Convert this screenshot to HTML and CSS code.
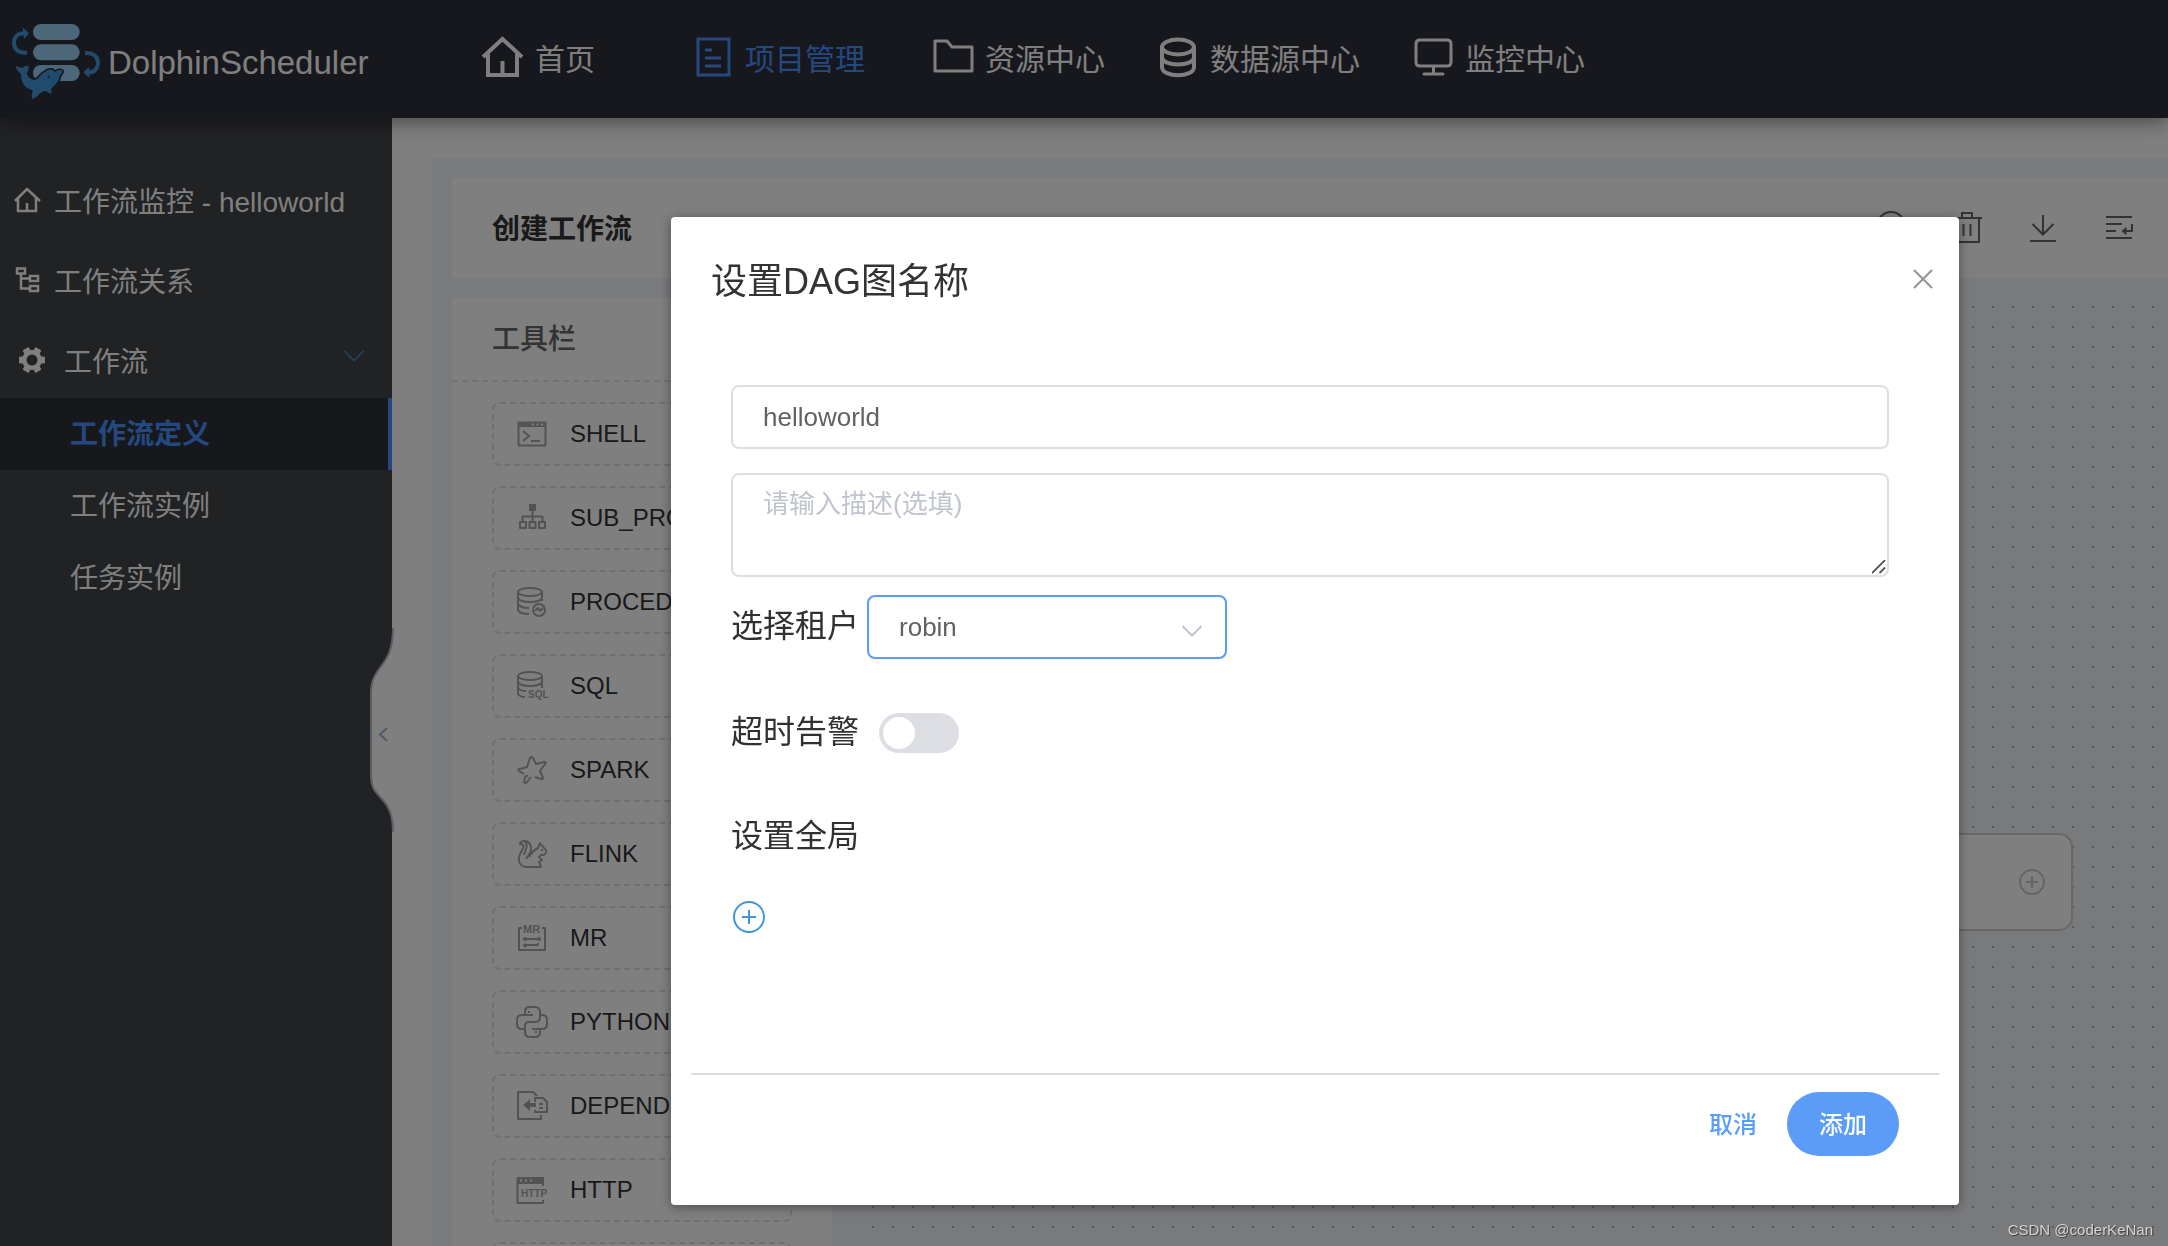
FILE: index.html
```html
<!DOCTYPE html>
<html lang="zh-CN">
<head>
<meta charset="utf-8">
<meta name="viewport" content="width=device-width, initial-scale=1">
<title>DolphinScheduler</title>
<link rel="stylesheet" href="styles.css">
</head>
<body>
<div class="app">
  <header class="topbar">
    <a class="logo" href="#">
      <svg class="logo-mark" viewBox="0 0 300 300" aria-hidden="true">
        <g fill="#98cff3">
          <rect x="99" y="42" width="140" height="48" rx="24"/>
          <rect x="99" y="103" width="140" height="48" rx="24"/>
          <rect x="99" y="165" width="140" height="48" rx="24"/>
        </g>
        <g fill="none" stroke="#4297d8" stroke-width="12">
          <path d="M81 128C54 131 42 116 42 99C42 80 54 70 72 70"/>
          <path d="M255 130C281 126 294 142 294 158C294 176 282 187 267 187"/>
        </g>
        <path fill="#4297d8" d="M68 52L87 70L72 87ZM268 170L250 187L268 204Z"/>
        <path fill="#4297d8" stroke="#2f313b" stroke-width="10" paint-order="stroke" d="M48 167C54 171 62 171 68 174C74 168 80 166 86 168C86 177 84 184 80 190C84 204 96 212 108 209C118 203 122 192 135 186C140 180 148 178 158 180L164 187C172 180 184 178 187 183C188 188 183 191 180 196C178 212 166 226 154 235L153 252L138 243C128 244 122 247 118 252C112 259 106 264 97 267C94 262 96 250 98 241C80 236 66 224 64 205C63 198 64 193 62 190C52 184 48 176 48 167Z"/>
        <circle cx="146" cy="200" r="3" fill="#2f313b"/>
      </svg>
      <span>DolphinScheduler</span>
    </a>
    <nav class="main-nav">
      <a href="#"><svg viewBox="0 0 44 44"><path fill="none" stroke="currentColor" stroke-width="4" d="M2 22L21.500 4L41 22M7 19V40H36V19M21.500 26V39"/></svg>首页</a>
      <a href="#" class="current"><svg viewBox="0 0 44 44"><path fill="none" stroke="currentColor" stroke-width="3" d="M7 4H38V40H7ZM14 15H21M14 23H30M14 31H30"/></svg>项目管理</a>
      <a href="#"><svg viewBox="0 0 44 44"><path fill="none" stroke="currentColor" stroke-width="3" stroke-linejoin="round" d="M4 6H16L21 12H41V36H4Z"/></svg>资源中心</a>
      <a href="#"><svg viewBox="0 0 44 44"><g fill="none" stroke="currentColor" stroke-width="4"><ellipse cx="22" cy="12" rx="16" ry="7.500"/><path d="M6 12V32C6 43 38 43 38 32V12M6 22C6 32 38 32 38 22"/></g></svg>数据源中心</a>
      <a href="#"><svg viewBox="0 0 44 44"><path fill="none" stroke="currentColor" stroke-width="3" stroke-linecap="round" d="M9 5H36Q40 5 40 9V27Q40 31 36 31H9Q5 31 5 27V9Q5 5 9 5ZM22.500 31V38M13 39H32"/></svg>监控中心</a>
    </nav>
  </header>

  <div class="shell">
    <aside class="sidebar">
      <a class="side-link" href="#"><svg viewBox="0 0 30 30"><path fill="none" stroke="currentColor" stroke-width="2.500" d="M1 16L13 4L26 16M4 13V26H22V13M13 18V26"/></svg>工作流监控 - helloworld</a>
      <a class="side-link" href="#"><svg viewBox="0 0 30 30"><path fill="none" stroke="currentColor" stroke-width="2.500" d="M3 3.500H11V8.500H3ZM16 11H24V16H16ZM16 21H24V26H16ZM7 9V23.500H16M7 13.500H16"/></svg>工作流关系</a>
      <a class="side-link group" href="#"><svg viewBox="0 0 30 30"><g fill="currentColor"><rect x="11.500" y="2" width="7" height="26" rx="1" transform="rotate(30 15 15)"/><rect x="11.500" y="2" width="7" height="26" rx="1" transform="rotate(90 15 15)"/><rect x="11.500" y="2" width="7" height="26" rx="1" transform="rotate(150 15 15)"/><circle cx="15" cy="15" r="10"/></g><circle cx="15" cy="15" r="5.500" fill="#424449"/></svg>工作流<svg class="fold" viewBox="0 0 20 12"><path fill="none" stroke="#4690d0" stroke-width="1.500" d="M0.500 1L10 10.500L19.500 1"/></svg></a>
      <div class="side-sub">
        <a class="current" href="#">工作流定义</a>
        <a href="#">工作流实例</a>
        <a href="#">任务实例</a>
      </div>
    </aside>

    <main class="main">
      <button class="collapse" type="button" aria-label="收起菜单"><svg viewBox="0 0 24 206" preserveAspectRatio="none"><path fill="#fff" d="M24 0H23C23 42 1 36 1 66V150C1 174 23 168 23 206H24Z"/><path fill="none" stroke="#b9bccd" stroke-width="2" d="M23 0C23 42 1 36 1 66V150C1 174 23 168 23 206"/><path fill="none" stroke="#9fb0d6" stroke-width="2" d="M17 101L10 107.500L17 114"/></svg></button>
      <section class="workspace">
        <div class="work-head">
          <h1>创建工作流</h1>
          <div class="work-tools">
            <button type="button" aria-label="查看"><svg viewBox="0 0 32 32"><circle cx="16" cy="15" r="14"/></svg></button>
            <button type="button" aria-label="删除"><svg viewBox="0 0 32 32"><path d="M1 7H31M11 7V2H21V7M4 7V31H28V7M12.500 13V25M19.500 13V25"/></svg></button>
            <button type="button" aria-label="下载"><svg viewBox="0 0 32 32"><path d="M16 4V22M5.500 13L16 23.500L26.500 13M3 30H29"/></svg></button>
            <button type="button" aria-label="格式化"><svg viewBox="0 0 32 32"><path d="M3 6H29M3 13H19M3 20H13M3 27H29M29 13V20H20M23.500 17L20 20L23.500 23"/></svg></button>
          </div>
        </div>
        <div class="work-body">
          <div class="toolbox">
            <h2>工具栏</h2>
            <ul>
              <li><svg viewBox="0 0 32 32"><path d="M2.500 4.500H29.500V27.500H2.500ZM7 13L13 18L7 23M15 23H24"/><path class="solid" d="M2 4H30V9H2Z"/><path stroke="#fff" d="M16 6.500h2M20.500 6.500h2M25 6.500h2"/></svg>SHELL</li>
              <li><svg viewBox="0 0 32 32"><path class="solid" d="M13 2H20V9H13Z"/><path d="M16.500 9V20M6.500 20V14.500H26.500V20M4 20H10V26H4ZM13.500 20H19.500V26H13.500ZM23 20H29V26H23Z"/></svg>SUB_PROCESS</li>
              <li><svg viewBox="0 0 32 32"><ellipse cx="14" cy="6" rx="12" ry="4"/><path d="M2 6V24Q4 28 13 28M26 6V15M2 12Q4 16 14 16T26 12M2 18Q4 22 13 22"/><circle cx="23" cy="24" r="6"/><path d="M19 25L22 22L24 25L27 22"/></svg>PROCEDURE</li>
              <li><svg viewBox="0 0 32 32"><ellipse cx="14" cy="6" rx="12" ry="4"/><path d="M2 6V24Q4 27 9 27M26 6V18M2 12Q4 16 14 16T26 12M2 18Q4 21 10 21"/><text x="12" y="28" font-size="10">SQL</text></svg>SQL</li>
              <li><svg viewBox="0 0 32 32"><path d="M8 20L3 17Q1 15 4 15L11 13L14 4Q15 2 17 4L20 10L28 8Q31 8 29 10L24 17L27 24Q27 26 25 25L19 23M12 22Q9 21 9 24L8 28Q9 30 11 28L15 23"/></svg>SPARK</li>
              <li><svg viewBox="0 0 32 32"><path d="M10 21C14 15 17 12 14 6C11 1 4 3 4 6C10 6 7 11 4 16C1 23 4 29 11 29H25C25 27 24 26 23 24L26 22L23 19L25 17H28C31 14 31 12 28 10L24 5L22 10C17 12 16 15 13 19M9 4C13 8 9 12 8 17"/><path class="solid" d="M25 11h2v2h-2z"/></svg>FLINK</li>
              <li><svg viewBox="0 0 32 32"><path d="M6 6H3V28H29V6H26M8 17H24M8 23H22V21"/><circle class="solid" cx="9" cy="17" r="2"/><circle class="solid" cx="23" cy="17" r="2"/><circle class="solid" cx="9" cy="23.500" r="2"/><text x="7" y="11" font-size="11">MR</text></svg>MR</li>
              <li><svg viewBox="0 0 32 32"><path d="M17 9H9V5Q9 1 14 1H19Q24 1 24 6V11Q24 16 19 16H13Q9 16 9 20V26Q9 31 14 31H19Q24 31 24 26V23H16M9 9H6Q1 9 1 14V18Q1 23 6 23H9M24 9H26Q31 9 31 14V18Q31 23 26 23H24M13 5v2M20 25v2"/></svg>PYTHON</li>
              <li><svg viewBox="0 0 32 32"><path d="M21 6L17 2H2V29H25V25M19 12V8H27L31 12V22H19V20M23 14H27M23 18H27"/><path class="solid" d="M7 15L14 9V13H20V17H14V21Z"/></svg>DEPENDENT</li>
              <li><svg viewBox="0 0 32 32"><path d="M1.500 4V29H27V26M27 12V10"/><path class="solid" d="M1 3H28V10H1Z"/><path stroke="#fff" d="M4 6.500h2M9 6.500h2M14 6.500h2"/><text x="5" y="23" font-size="10">HTTP</text></svg>HTTP</li>
              <li></li>
            </ul>
          </div>
          <div class="canvas">
            <div class="node"><svg viewBox="0 0 26 26"><circle cx="13" cy="13" r="12"/><path d="M7 13H19M13 7V19"/></svg></div>
          </div>
        </div>
      </section>
    </main>
  </div>
</div>

<div class="overlay">
  <form class="dialog" role="dialog" aria-labelledby="dialog-title">
    <div class="dialog-head">
      <h2 id="dialog-title">设置DAG图名称</h2>
      <button class="close" type="button" aria-label="关闭"><svg viewBox="0 0 20 20"><path fill="none" stroke="#909399" stroke-width="2" d="M1 1L19 19M19 1L1 19"/></svg></button>
    </div>
    <div class="dialog-body">
      <input class="field" type="text" value="helloworld" aria-label="名称">
      <textarea class="field" placeholder="请输入描述(选填)" aria-label="描述"></textarea>
      <div class="row tenant">
        <label for="tenant">选择租户</label>
        <span class="select-wrap">
          <select id="tenant" class="field"><option>robin</option></select>
          <svg viewBox="0 0 20 12"><path fill="none" stroke="#c0c4cc" stroke-width="2" d="M0.500 1L10 10.500L19.500 1"/></svg>
        </span>
      </div>
      <div class="row alarm">
        <label for="alarm">超时告警</label>
        <input id="alarm" class="switch" type="checkbox">
      </div>
      <div class="row">
        <span class="row-title">设置全局</span>
      </div>
      <button class="add-param" type="button" aria-label="添加参数"><svg viewBox="0 0 32 32"><path fill="none" stroke="#3f94dc" stroke-width="2" d="M16 1A15 15 0 1 1 16 31A15 15 0 1 1 16 1M9 16H23M16 9V23"/></svg></button>
    </div>
    <div class="dialog-foot">
      <button class="btn-text" type="button">取消</button>
      <button class="btn-primary" type="submit">添加</button>
    </div>
  </form>
  <span class="watermark">CSDN @coderKeNan</span>
</div>
</body>
</html>
```
FILE: styles.css
```css
* { box-sizing: border-box; }

body {
  margin: 0;
  font-family: "Liberation Sans", "Noto Sans CJK SC", sans-serif;
  color: #333;
  background: #fff;
}

a { color: inherit; text-decoration: none; }
h1, h2, ul { margin: 0; padding: 0; }
ul { list-style: none; }
svg { display: block; flex: none; }
button { padding: 0; border: 0; background: none; font: inherit; cursor: pointer; }

.app {
  display: flex;
  flex-direction: column;
  height: 100vh;
  overflow: hidden;
}

/* Top bar */
.topbar {
  position: relative;
  z-index: 2;
  display: flex;
  flex: none;
  height: 118px;
  background: #2f313b;
  color: #fff;
  box-shadow: 0 2px 20px rgba(0, 0, 0, .5);
}
.logo {
  display: flex;
  align-items: center;
  gap: 8px;
  width: 418px;
  padding-top: 2px;
  font-size: 33px;
}
.logo span { padding-top: 6px; }
.logo-mark { width: 100px; height: 100px; }
.main-nav { display: flex; padding-bottom: 5px; }
.main-nav a {
  display: flex;
  align-items: center;
  justify-content: center;
  gap: 10px;
  width: 240px;
  font-size: 30px;
}
.main-nav svg { width: 44px; height: 44px; }
.main-nav .current { color: #4a90ff; }

/* Side menu */
.shell { display: flex; flex: 1; min-height: 0; }
.sidebar {
  flex: none;
  width: 392px;
  padding-top: 40px;
  background: #424449;
  color: #fff;
  font-size: 28px;
}
.side-link {
  display: flex;
  align-items: center;
  gap: 10px;
  height: 80px;
  padding: 3px 28px 0 14px;
}
.side-link svg { width: 30px; height: 30px; }
.side-link.group { padding-left: 17px; gap: 17px; }
.side-link .fold { width: 20px; height: 12px; margin: 0 0 8px auto; }
.side-sub a {
  display: flex;
  align-items: center;
  height: 72px;
  padding: 0 0 4px 70px;
}
.side-sub .current {
  background: #2d3037;
  border-right: 4px solid #4a90ff;
  color: #4a90ff;
  font-weight: 700;
}

/* Workspace */
.main {
  position: relative;
  display: flex;
  flex: 1;
  min-width: 0;
  padding: 40px 0 0 40px;
}
.collapse { position: absolute; left: -22px; top: 510px; }
.collapse svg { width: 24px; height: 204px; }
.workspace {
  display: flex;
  flex-direction: column;
  flex: 1;
  gap: 20px;
  min-width: 0;
  padding: 20px 0 0 20px;
  background: #f3f4f8;
}
.work-head {
  display: flex;
  align-items: center;
  justify-content: space-between;
  flex: none;
  height: 100px;
  padding: 0 33px 3px 40px;
  background: #fff;
}
.work-head h1 { font-size: 28px; font-weight: 700; }
.work-tools { display: flex; gap: 44px; }
.work-tools svg {
  width: 32px;
  height: 32px;
  fill: none;
  stroke: #666;
  stroke-width: 2;
}
.work-body { display: flex; flex: 1; min-height: 0; }
.toolbox { flex: none; width: 380px; background: #fff; }
.toolbox h2 {
  height: 84px;
  padding-left: 40px;
  border-bottom: 2px dashed #e4e4e4;
  color: #666;
  font-size: 28px;
  font-weight: 500;
  line-height: 84px;
}
.toolbox ul {
  display: flex;
  flex-direction: column;
  gap: 20px;
  padding: 20px 40px;
}
.toolbox li {
  display: flex;
  align-items: center;
  gap: 22px;
  flex: none;
  height: 64px;
  padding-left: 22px;
  border: 2px dashed #e0e0e0;
  border-radius: 8px;
  font-size: 24px;
}
.toolbox svg {
  width: 32px;
  height: 32px;
  fill: none;
  stroke: #a6a6a6;
  stroke-width: 2;
  stroke-linejoin: round;
}
.toolbox .solid, .toolbox text { fill: #a6a6a6; stroke: none; }
.toolbox text { font-weight: 700; }
.canvas {
  position: relative;
  flex: 1;
  margin-left: 40px;
  background-image: conic-gradient(from 270deg at 2px 2px, #aeb0b4 90deg, transparent 0);
  background-position: 0 8px;
  background-size: 20px 20px;
}
.node {
  position: absolute;
  top: 535px;
  right: 95px;
  display: flex;
  align-items: center;
  justify-content: flex-end;
  width: 360px;
  height: 98px;
  padding-right: 26px;
  border: 2px solid #d0d0d0;
  border-radius: 14px;
  background: #fff;
}
.node svg { width: 26px; height: 26px; fill: none; stroke: #cacaca; stroke-width: 2; }

/* Dialog */
.overlay {
  position: fixed;
  inset: 0;
  z-index: 10;
  display: flex;
  align-items: flex-start;
  justify-content: flex-end;
  padding: 217px 209px 0 0;
  background: rgba(0, 0, 0, .5);
}
.dialog {
  width: 1288px;
  max-width: 100%;
  border-radius: 4px;
  background: #fff;
  box-shadow: 0 2px 12px rgba(0, 0, 0, .4);
}
.dialog-head {
  display: flex;
  align-items: center;
  justify-content: space-between;
  height: 124px;
  padding: 0 26px 0 40px;
}
.dialog-head h2 { padding-bottom: 2px; font-size: 36px; font-weight: 400; }
.close svg { width: 20px; height: 20px; }
.dialog-body {
  height: 732px;
  padding: 44px 70px 0 60px;
  color: #303133;
  font-size: 32px;
}
.field {
  display: block;
  width: 100%;
  height: 64px;
  padding: 0 30px;
  border: 2px solid #dcdee4;
  border-radius: 8px;
  outline: 0;
  background: #fff;
  color: #606266;
  font: 26px "Liberation Sans", "Noto Sans CJK SC", sans-serif;
}
textarea.field {
  height: 104px;
  margin-top: 24px;
  padding-top: 10px;
  line-height: 39px;
  resize: vertical;
}
textarea.field::-webkit-resizer {
  background: url("data:image/svg+xml,%3Csvg xmlns='http://www.w3.org/2000/svg' viewBox='0 0 16 16'%3E%3Cpath d='M0 14L14 0M8 14L14 8' stroke='%23555' stroke-width='2'/%3E%3C/svg%3E") 0 0 / 100% 100% no-repeat;
}
.field::placeholder { color: #c0c4cc; opacity: 1; }
.row { display: flex; align-items: center; height: 64px; }
.row label, .row-title { padding-bottom: 8px; }
.tenant { gap: 8px; margin-top: 18px; }
.alarm { gap: 20px; margin: 42px 0 40px; }
.select-wrap { position: relative; width: 360px; }
.select-wrap .field { appearance: none; border-color: #5a9cf8; }
.select-wrap svg {
  position: absolute;
  top: 30px;
  right: 25px;
  width: 20px;
  height: 12px;
  pointer-events: none;
}
.switch {
  appearance: none;
  width: 80px;
  height: 40px;
  margin: 0;
  padding: 4px;
  border-radius: 20px;
  background: #dcdee4;
}
.switch::before {
  content: "";
  display: block;
  width: 32px;
  height: 32px;
  border-radius: 50%;
  background: #fff;
}
.add-param { display: block; margin: 32px 0 0 2px; }
.add-param svg { width: 32px; height: 32px; }
.dialog-foot {
  display: flex;
  align-items: flex-start;
  justify-content: flex-end;
  gap: 30px;
  height: 132px;
  margin: 0 20px;
  padding: 17px 40px 0 0;
  border-top: 2px solid #dcdddf;
  font-size: 24px;
}
.dialog-foot button { height: 64px; padding-bottom: 4px; font-weight: 500; }
.btn-text { color: #5a9cf8; }
.dialog-foot .btn-primary {
  width: 112px;
  border-radius: 32px;
  background: #5a9cf8;
  color: #fff;
}
.watermark {
  position: absolute;
  right: 15px;
  bottom: 8px;
  color: #d4d4d4;
  font-size: 15px;
  text-shadow: 1px 1px 1px rgba(0, 0, 0, .5);
}
```
